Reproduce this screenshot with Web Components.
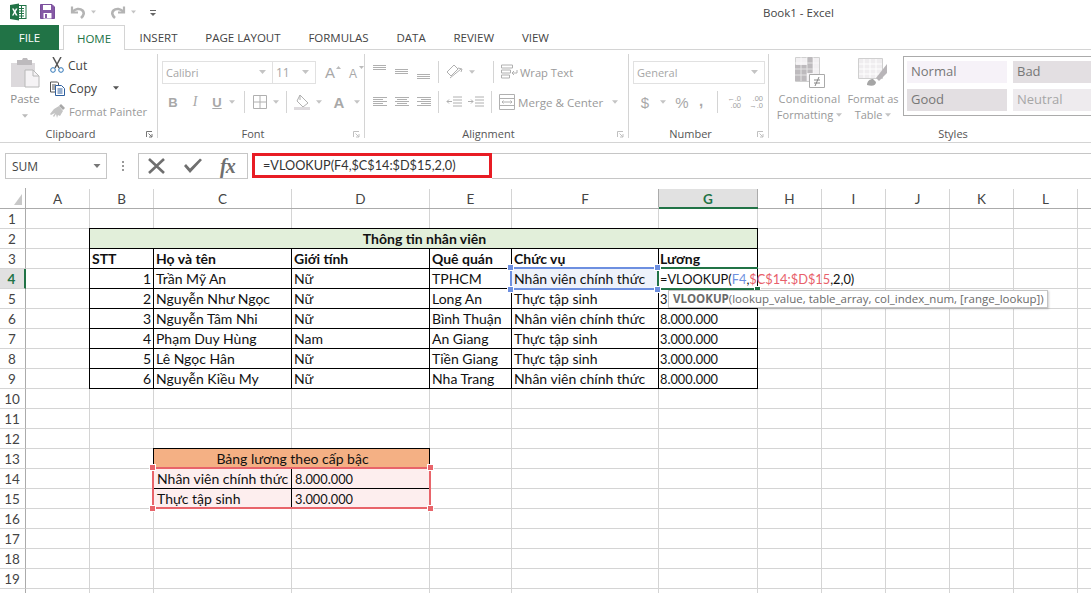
<!DOCTYPE html>
<html><head><meta charset="utf-8"><title>Book1 - Excel</title>
<style>
html,body{margin:0;padding:0;height:593px;overflow:hidden;background:#fff}
xl-app{display:flex;flex-direction:column;width:1091px;height:593px;overflow:hidden;font-family:"Open Sans","Noto Sans",sans-serif;color:#444}
</style></head><body>
<xl-app>
<xl-titlebar></xl-titlebar>
<xl-tabs></xl-tabs>
<xl-ribbon></xl-ribbon>
<xl-formula-bar></xl-formula-bar>
<xl-sheet></xl-sheet>
</xl-app>
<script>
const arrow=(c='#aaa',w=7)=>`<svg width="${w}" height="4" viewBox="0 0 7 4"><path d="M0 0h7L3.5 4z" fill="${c}"/></svg>`;
const lines=(rows,w=14,c='#b0b0b0')=>`<svg width="${w}" height="16" viewBox="0 0 ${w} 16"><g stroke="${c}" stroke-width="1">${rows.map(r=>`<path d="M${r[0]} ${r[2]+.5}H${r[1]}"/>`).join('')}</g></svg>`;
function def(name,css,html,after){
  customElements.define(name,class extends HTMLElement{
    connectedCallback(){
      if(this.shadowRoot)return;
      const s=this.attachShadow({mode:'open'});
      s.innerHTML=`<style>${css}</style>`+(typeof html==='function'?html(this):html);
      if(after)after(s,this);
    }
  });
}
const undo=`<path d="M3 1.500v6h6" fill="none" stroke="#b4b4b4" stroke-width="2.200"/><path d="M3.500 7C6 3.500 11 3 13.500 5.500c2 2 1.500 5-1.500 7.500" fill="none" stroke="#b4b4b4" stroke-width="2.600"/>`;
def('xl-titlebar',`
:host{display:flex;height:25px;flex:none;align-items:center;font:12px "Open Sans",sans-serif;color:#444;position:relative}
svg{display:block;flex:none}
.t{position:absolute;left:763px;top:5px;font-size:11.5px;line-height:16px;color:#444}
.q{display:flex;align-items:center;padding-left:9px}
`,`<div class="q">
<svg width="18" height="18" viewBox="0 0 18 18" style="margin-top:-2px"><rect x="8" y="2.500" width="9" height="13" fill="#fff" stroke="#217346"/><path d="M10 5.500h5M10 8h5M10 10.500h5M10 13h5M12.500 3v12" stroke="#217346"/><path d="M1 2l9-1.500v17L1 16z" fill="#217346"/><path d="M3 5.500h1.800l1 2 1-2h1.700L6.700 9l1.900 3.500H6.800L5.700 10.300 4.600 12.500H3L4.900 9z" fill="#fff"/></svg>
<svg width="15" height="15" viewBox="0 0 15 15" style="margin-left:13px;margin-top:-2px"><path d="M.5.500h11.500l2.500 2.500v11.500H.5z" fill="#8559a5" stroke="#7a4f9c"/><rect x="3" y="1" width="8" height="5" fill="#fff"/><rect x="3.500" y="9" width="8" height="5.500" fill="#fff"/><rect x="5" y="10" width="2" height="4" fill="#8559a5"/></svg>
<svg width="16" height="14" viewBox="0 0 16 14" style="margin-left:14px;margin-top:-2px">${undo}</svg>
<span style="margin-left:6px;margin-top:-2px;line-height:0">${arrow('#c4c4c4',5)}</span>
<svg width="16" height="14" viewBox="0 0 16 14" style="margin-left:15px;margin-top:-2px;transform:scaleX(-1)">${undo}</svg>
<span style="margin-left:4px;margin-top:-2px;line-height:0">${arrow('#c4c4c4',5)}</span>
<svg width="6" height="7" viewBox="0 0 6 7" style="margin-left:14px;margin-top:1px"><path d="M0 .500h6" stroke="#666"/><path d="M0 3h6L3 6z" fill="#666"/></svg>
</div><span class="t">Book1 - Excel</span>`);

def('xl-tabs',`
:host{display:flex;height:25px;flex:none;box-sizing:border-box;border-bottom:1px solid #d4d4d4;font:11.5px "Open Sans",sans-serif;color:#444}
.f{width:59px;height:25px;background:#217346;color:#fff;display:flex;align-items:center;justify-content:center;flex:none}
.h{margin-left:4px;width:62px;height:25px;box-sizing:border-box;border:1px solid #d4d4d4;border-bottom:0;background:#fff;color:#217346;display:flex;align-items:center;justify-content:center;flex:none}
.r{display:flex;align-items:center;gap:27.8px;padding-left:14.5px;height:24px}
`,`<div class="f">FILE</div><div class="h">HOME</div><div class="r"><span>INSERT</span><span>PAGE LAYOUT</span><span>FORMULAS</span><span>DATA</span><span>REVIEW</span><span>VIEW</span></div>`);

def('xl-group',`
:host{display:flex;flex-direction:column;flex:none;height:84px;box-sizing:border-box;border-right:1px solid #d4d4d4}
.b{flex:1;min-height:0;display:block}
.l{display:flex;align-items:center;height:13px;flex:none;margin-bottom:-2px}
.l span{flex:1;text-align:center;font-size:11px;color:#555;line-height:13px}
.l span.p{padding-right:5px}
.l svg{flex:none;margin:1px 4px 0 0}
`,h=>`<div class="b"><slot></slot></div><div class="l"><span class="${h.hasAttribute('nolaunch')?'':'p'}">${h.getAttribute('label')}</span>${h.hasAttribute('nolaunch')?'':`<svg width="7" height="7" viewBox="0 0 7 7"><path d="M.5 6V.5H6" fill="none" stroke="${h.getAttribute('lc')||'#c0c0c0'}"/><path d="M2.500 2.500L6 6M6 3v3H3" fill="none" stroke="${h.getAttribute('lc')||'#c0c0c0'}"/></svg>`}</div>`);

const alignTop=lines([[1,14,1],[1,14,3],[1,14,5]],15);
const alignMid=lines([[1,14,5],[1,14,7],[1,14,9]],15);
const alignBot=lines([[1,14,10],[1,14,12],[1,14,14]],15);
const aL=lines([[1,15,3],[1,11,5],[1,15,7],[1,11,9],[1,15,11]],15);
const aC=lines([[1,15,3],[3,13,5],[1,15,7],[3,13,9],[1,15,11]],15);
const aR=lines([[1,15,3],[5,15,5],[1,15,7],[5,15,9],[1,15,11]],15);
def('xl-ribbon',`
:host{display:flex;height:93px;flex:none;box-sizing:border-box;border-bottom:1px solid #d4d4d4;padding-top:4px;font:11.5px "Open Sans",sans-serif;color:#999}
svg{display:block;flex:none}
.rows{display:flex;flex-direction:column;gap:8px;padding-top:7px}
.row{display:flex;align-items:center;height:22px}
.sep{width:1px;height:22px;background:#d4d4d4;flex:none}
.combo{box-sizing:border-box;height:23px;border:1px solid #e1e1e1;display:flex;align-items:center;justify-content:space-between;padding:0 6px 0 3px;color:#a6a6a6;font-size:11px;flex:none;background:#fff}
.gl{display:flex;justify-content:center;flex:none;color:#a8a8a8;font-weight:700;font-family:"Liberation Sans",sans-serif}
.sm{flex:none;width:16px;font:7.5px/7px "Liberation Sans",sans-serif;color:#a0a0a0;text-align:right;white-space:nowrap}
.clip{display:flex;height:100%}
.paste{width:50px;flex:none;display:flex;flex-direction:column;align-items:center;padding-top:4px;box-sizing:border-box;color:#8e8e8e}
.paste span{margin-top:3px;line-height:16px}
.paste svg:last-child{margin-top:7px}
.cc{display:flex;flex-direction:column;padding-top:3px;gap:7px}
.cc div{display:flex;align-items:center;height:16px;gap:4px;color:#444;font-size:12px}
.cc .off{color:#999;font-size:11.2px}
.big{display:flex;flex-direction:column;align-items:center;flex:none;text-align:center;line-height:16px;font-size:11px;color:#999;padding-top:3px}
.big svg{margin-bottom:3px}
.styles{display:flex;height:100%;padding-left:6px}
.gal{margin-left:1px;margin-top:2px;width:370px;height:60px;box-sizing:border-box;border:1px solid #ababab;padding:4px 3px;display:grid;grid-template-columns:100px 100px;grid-template-rows:22px 22px;gap:6px;flex:none}
.gal div{font-size:13px;line-height:20px;padding-left:4px;color:#777}
`,`
<xl-group label="Clipboard" lc="#777" style="width:158px"><div class="clip">
 <div class="paste"><svg width="30" height="30" viewBox="0 0 30 30"><path d="M1 5h24v24H1z" fill="#dcd9dc"/><path d="M7 2h5l1-2h4l1 2h4v5H7z" fill="#bdbabd"/><path d="M15 12h8l6 6v11H15z" fill="#f5f3f5" stroke="#b8b8b8"/><path d="M23 12v6h6" fill="none" stroke="#b8b8b8"/></svg><span>Paste</span>${arrow('#bbb',6)}</div>
 <div class="cc">
  <div><svg width="14" height="16" viewBox="0 0 14 16"><path d="M3 0l6 11M11 0L5 11" stroke="#555" stroke-width="1.500"/><circle cx="3" cy="13" r="2.300" fill="none" stroke="#2e75b6"/><circle cx="11" cy="13" r="2.300" fill="none" stroke="#2e75b6"/></svg><span>Cut</span></div>
  <div><svg width="15" height="15" viewBox="0 0 15 15"><path d="M.5 1h7l1 1v9H.5z" fill="#fff" stroke="#555"/><path d="M2 4h4M2 6h4M2 8h3" stroke="#555"/><path d="M5.500 4.500h6l3 3v7h-9z" fill="#fff" stroke="#2e5f9e"/><path d="M7.500 8h5M7.500 10h5M7.500 12h5" stroke="#2e5f9e"/></svg><span>Copy</span><span style="margin-left:12px">${arrow('#555',6)}</span></div>
  <div class="off"><svg width="15" height="15" viewBox="0 0 15 15"><path d="M9 2l2-2 4 4-2 2z" fill="#a8a8a8"/><path d="M4 5l5-3 4 5-3 5-2-1-1 3-1-4-2 3-1-1 2-3-4 2-1-1z" fill="#c4c4c4"/></svg><span>Format Painter</span></div>
 </div></div></xl-group>

<xl-group label="Font" style="width:207px"><div class="rows" style="padding-left:4px">
 <div class="row"><div class="combo" style="width:111px"><span>Calibri</span>${arrow('#c4c4c4')}</div><div class="combo" style="width:43px;border-left:0"><span style="font-size:12px">11</span>${arrow('#c4c4c4')}</div>
  <span class="gl" style="width:14px;margin-left:7px;font-size:15px;font-weight:400">A</span><svg width="5" height="3" viewBox="0 0 5 3" style="margin:-9px 0 0 -1px"><path d="M0 3h5L2.500 0z" fill="#bbb"/></svg>
  <span class="gl" style="width:14px;margin-left:5px;font-size:12px;font-weight:400;margin-top:3px">A</span><svg width="5" height="3" viewBox="0 0 5 3" style="margin:-9px 0 0 -1px"><path d="M0 0h5L2.500 3z" fill="#bbb"/></svg></div>
 <div class="row"><span class="gl" style="width:22px;font-size:13px">B</span><span class="gl" style="width:22px;font:italic 14px 'Liberation Serif',serif;color:#a8a8a8">I</span><span class="gl" style="width:22px;font-size:13px;text-decoration:underline">U</span><span style="width:11px;margin-left:1px">${arrow('#c4c4c4',6)}</span><div class="sep" style="margin-left:4px"></div>
 <svg width="14" height="14" viewBox="0 0 14 14" style="margin-left:8px"><path d="M.5.500h13v13H.500zM7 .5v13M.5 7h13" fill="none" stroke="#b0b0b0"/></svg><span style="margin-left:6px">${arrow('#c4c4c4',6)}</span><div class="sep" style="margin-left:7px"></div>
 <svg width="17" height="16" viewBox="0 0 17 16" style="margin-left:7px"><path d="M6 1L14 9l-5 4-6-6z" fill="none" stroke="#b0b0b0"/><path d="M6 1v5" stroke="#b0b0b0"/><path d="M0 13h16v3H0z" fill="#dedbde"/></svg><span style="margin-left:5px">${arrow('#c4c4c4',6)}</span>
 <span class="gl" style="width:18px;margin-left:8px;font-size:15px">A</span><span style="margin-left:6px">${arrow('#c4c4c4',6)}</span></div>
</div></xl-group>

<xl-group label="Alignment" style="width:264px"><div class="rows" style="padding-left:7px">
 <div class="row">${alignTop}<span style="width:7px"></span>${alignMid}<span style="width:7px"></span>${alignBot}<div class="sep" style="margin:0 7px"></div>
  <svg width="17" height="16" viewBox="0 0 17 16"><g fill="none" stroke="#b0b0b0"><path d="M1 8L8 1l4 4-7 7z"/><path d="M4 14L15 5M12 4l4 1-1 3"/></g></svg><span style="margin-left:6px">${arrow('#c4c4c4',6)}</span><div class="sep" style="margin-left:18px"></div>
  <svg width="17" height="16" viewBox="0 0 17 16" style="margin-left:7px"><g fill="none" stroke="#b0b0b0"><path d="M.5 1h11v3H.5zM.5 6h9v3H.5zM.5 11h8v3H.5z"/><path d="M16 6v3h-5M13 7l-2 2 2 2"/></g></svg><span style="margin-left:2px;color:#9a9a9a;font-size:11.200px">Wrap Text</span></div>
 <div class="row">${aL}<span style="width:7px"></span>${aC}<span style="width:7px"></span>${aR}<div class="sep" style="margin:0 7px"></div>
  <svg width="16" height="16" viewBox="0 0 16 16"><g fill="none" stroke="#b0b0b0"><path d="M7 3h9M7 6h9M7 9h9M7 12h9M1 7.500h5M3 5.500l-2 2 2 2"/></g></svg><span style="width:6px"></span><svg width="16" height="16" viewBox="0 0 16 16"><g fill="none" stroke="#b0b0b0"><path d="M7 3h9M7 6h9M7 9h9M7 12h9M0 7.500h5M3 5.500l2 2-2 2"/></g></svg><div class="sep" style="margin-left:7px"></div>
  <svg width="16" height="16" viewBox="0 0 16 16" style="margin-left:7px"><g fill="none" stroke="#b0b0b0"><path d="M.5.500h15v15H.500zM.5 4.500h15M.5 11.500h15"/><path d="M3 8h10M4.500 6.500L3 8l1.500 1.500M11.500 6.500L13 8l-1.500 1.500"/></g></svg><span style="margin-left:3px;color:#9a9a9a;font-size:11.600px">Merge &amp; Center</span><span style="margin-left:9px">${arrow('#c4c4c4',6)}</span></div>
</div></xl-group>

<xl-group label="Number" style="width:140px"><div class="rows" style="padding-left:4px">
 <div class="row"><div class="combo" style="width:132px"><span>General</span>${arrow('#c4c4c4')}</div></div>
 <div class="row"><span class="gl" style="width:14px;margin-left:5px;font-size:15px;font-weight:400">$</span><span style="margin-left:8px">${arrow('#c4c4c4',6)}</span><span class="gl" style="width:16px;margin-left:8px;font-size:15px;font-weight:400">%</span><span class="gl" style="width:8px;margin-left:7px;font-size:15px;margin-top:-3px">,</span><div class="sep" style="margin-left:12px"></div>
 <span class="sm" style="margin-left:7px">←.0<br>.00</span><span class="sm" style="margin-left:6px">.00<br>→.0</span></div>
</div></xl-group>

<xl-group label="Styles" nolaunch style="width:368px;border-right:0"><div class="styles">
 <div class="big" style="width:69px"><svg width="30" height="31" viewBox="0 0 30 31"><path d="M.5.500h24v24H.500z" fill="#f2f0f2" stroke="#d0d0d0"/><path d="M12 0h6v8h-6zM0 8h18v8H0zM0 16h12v8H0z" fill="#bdbabd"/><path d="M6 0v24M12 0v24M18 0v24M0 6h24M0 12h24M0 18h24" stroke="#fff" opacity=".6"/><path d="M14.500 17.500h15v13h-15z" fill="#fff" stroke="#aaa"/><path d="M19 23h6M19 26h6M24 20l-4 9" stroke="#888" fill="none"/></svg><span style="color:#999;letter-spacing:.3px">Conditional</span><span style="color:#999">Formatting <span style="display:inline-block;vertical-align:middle">${arrow('#c4c4c4',6)}</span></span></div>
 <div class="big" style="width:58px"><svg width="30" height="31" viewBox="0 0 30 31"><path d="M.5 1.500h24v20H.500z" fill="#efedef" stroke="#cfcfcf"/><path d="M6 2v19M12 2v19M18 2v19M1 7h23M1 12h23M1 17h23" stroke="#fff"/><path d="M29 7L18 21l3 3 8-8z" fill="#b8b5b8"/><path d="M9 28c0-4 3-6 6-6l3 3c0 3-3 5-9 3z" fill="#a5a5a5"/></svg><span>Format as</span><span>Table <span style="display:inline-block;vertical-align:middle">${arrow('#c4c4c4',6)}</span></span></div>
 <div class="gal"><div style="background:#f6f2f8">Normal</div><div style="background:#e3dfe2">Bad</div><div style="background:#e3dfe2">Good</div><div style="background:#eeebee;color:#a6a6a6">Neutral</div></div>
</div></xl-group>
`);

def('xl-formula-bar',`
:host{display:flex;height:45px;flex:none;box-sizing:border-box;padding:10px 0 0 5px;font:12.500px "Open Sans",sans-serif;color:#444}
.nb{box-sizing:border-box;width:102px;height:26px;border:1px solid #c6c6c6;display:flex;align-items:center;justify-content:space-between;padding:0 5px 0 6px;font-size:12px}
.dots{width:31px;display:flex;flex-direction:column;gap:2px;align-items:center;justify-content:center;height:26px}
.dots i{width:2px;height:2px;background:#999}
.btns{box-sizing:border-box;width:110px;height:26px;border:1px solid #c6c6c6;display:flex;align-items:center;padding-left:8px}
.fx{font:italic 700 20px "Liberation Serif",serif;color:#6f6f6f;margin-left:17px;line-height:24px;letter-spacing:-1px}
.in{margin-left:4px;box-sizing:border-box;width:240px;height:25px;border:3px solid #e81c24;font:12.700px Lato,sans-serif;line-height:19px;padding:0 0 0 8px;color:#333;white-space:nowrap;overflow:hidden;flex:none}
.rest{flex:1;height:26px;box-sizing:border-box;border-top:1px solid #c6c6c6;border-bottom:1px solid #c6c6c6}
svg{display:block;flex:none}
`,`<div class="nb"><span>SUM</span>${arrow('#777',8)}</div><div class="dots"><i></i><i></i><i></i></div>
<div class="btns"><svg width="19" height="18" viewBox="0 0 19 18"><path d="M2 2l15 14M17 2L2 16" stroke="#6f6f6f" stroke-width="2.600"/></svg><svg width="20" height="18" viewBox="0 0 20 18" style="margin-left:17px"><path d="M1 9l6 7L19 3l-2-1.500L7 11.500 3 7z" fill="#6f6f6f"/></svg><span class="fx">fx</span></div>
<div class="in">=VLOOKUP(F4,$C$14:$D$15,2,0)</div><div class="rest"></div>`);

const COLS=['A','B','C','D','E','F','G','H','I','J','K','L'];
const W=[64,64,138,138,82,147,99,64,64,64,64,64];
const data={
 3:['STT','Họ và tên','Giới tính','Quê quán','Chức vụ','Lương'],
 4:[1,'Trần Mỹ An','Nữ','TPHCM','Nhân viên chính thức',''],
 5:[2,'Nguyễn Như Ngọc','Nữ','Long An','Thực tập sinh','3'],
 6:[3,'Nguyễn Tâm Nhi','Nữ','Bình Thuận','Nhân viên chính thức','8.000.000'],
 7:[4,'Phạm Duy Hùng','Nam','An Giang','Thực tập sinh','3.000.000'],
 8:[5,'Lê Ngọc Hân','Nữ','Tiền Giang','Thực tập sinh','3.000.000'],
 9:[6,'Nguyễn Kiều My','Nữ','Nha Trang','Nhân viên chính thức','8.000.000']};
function sheet(){
 let h='';
 const pos=(r,c,cs=1)=>`grid-row:${r+1};grid-column:${c+1}${cs>1?' / span '+cs:''}`;
 h+=`<div class="ch corner" style="${pos(0,0)}"><svg width="8" height="11" viewBox="0 0 8 11"><path d="M8 0v11H0z" fill="#c8c8c8"/></svg></div>`;
 COLS.forEach((n,i)=>h+=`<div class="ch${n==='G'?' sel':''}" style="${pos(0,i+1)}"><span>${n}</span></div>`);
 h+=`<div class="ch" style="${pos(0,13)}"></div>`;
 for(let r=1;r<=20;r++){
  h+=`<div class="rh${r===4?' sel':''}" style="${pos(r,0)}">${r<20?r:''}</div>`;
  for(let c=1;c<=13;c++){
   if(r===2&&c>=2&&c<=7){ if(c===2)h+=`<div class="c b mg" style="${pos(r,2,6)}">Thông tin nhân viên</div>`; continue;}
   if(r===13&&(c===3||c===4)){ if(c===3)h+=`<div class="c b org" style="${pos(r,3,2)}">Bảng lương theo cấp bậc</div>`; continue;}
   if(data[r]&&c>=2&&c<=7){
     const v=data[r][c-2]; let cl='c b';
     if(r===3)cl+=' hd'; if(r>3&&c===2)cl+=' num';
     if(c===7)cl+=' gc';
     if(r>4&&c===7)cl+=' dg';
     if(r===4&&c===6)cl+=' ftint';
     if(r===4&&c===7){h+=`<div class="c b edit" style="${pos(r,c)}"></div>`;continue;}
     h+=`<div class="${cl}" style="${pos(r,c)}">${v}</div>`; continue;
   }
   if(r===14||r===15){
     if(c===3||c===4){const t={14:['Nhân viên chính thức','8.000.000'],15:['Thực tập sinh','3.000.000']}[r][c-3];
       h+=`<div class="c b rtint${c===4?' dg':''}" style="${pos(r,c)}">${t}</div>`;continue;}
   }
   h+=`<div class="c" style="${pos(r,c)}"></div>`;
  }
 }
 h+=`<div class="ov blue" style="${pos(4,6)}"><i class="hd1" style="left:-4px;top:-4px"></i><i class="hd1" style="right:-1px;top:-4px"></i><i class="hd1" style="left:-4px;bottom:-4px"></i><i class="hd1" style="right:-1px;bottom:-4px"></i></div>`;
 h+=`<div class="ov red" style="grid-row:15 / span 2;grid-column:4 / span 2"><i class="hd2" style="left:-4px;top:-4px"></i><i class="hd2" style="right:-4px;top:-4px"></i><i class="hd2" style="left:-4px;bottom:-4px"></i><i class="hd2" style="right:-4px;bottom:-4px"></i></div>`;
 h+=`<div class="ov green" style="${pos(4,7)}"><i class="hd3"></i></div>`;
 h+=`<div class="fm" style="${pos(4,7,2)}">=VLOOKUP(<span style="color:#6d8fe0">F4</span>,<span style="color:#e8606a">$C$14:$D$15</span>,2,0)</div>`;
 h+=`<div class="tip"><b>VLOOKUP</b>(lookup_value, table_array, col_index_num, [range_lookup])</div>`;
 return `<div class="g">${h}</div>`;
}
def('xl-sheet',`
:host{display:block;flex:1;min-height:0;overflow:hidden;position:relative;font:14px Lato,"Noto Sans",sans-serif;color:#111}
.g{display:grid;position:relative;grid-template-columns:26px ${W.join('px ')}px 14px;grid-template-rows:21px repeat(20,20px);width:1091px}
.ch{box-sizing:border-box;border-bottom:1px solid #ababab;display:flex;align-items:stretch;color:#444;background:#fff;font-size:13.500px;padding-top:1px}
.ch span{flex:1;display:flex;align-items:center;justify-content:center;box-sizing:border-box;border-right:1px solid #d4d4d4;padding-top:1px}
.ch.corner{border-right:1px solid #ababab;justify-content:flex-end;align-items:flex-end;padding:0 3px 3px 0}
.ch.sel{color:#217346;font-weight:700;border-bottom:2px solid #217346}
.ch.sel span{background:#e1e1e1;border-left:1px solid #ababab;margin-left:-1px;border-right:1px solid #ababab}
.rh{box-sizing:border-box;border-right:1px solid #ababab;border-bottom:1px solid #d4d4d4;display:flex;align-items:center;justify-content:center;color:#444;font-size:13.500px;background:#fff;padding:1px 1px 0 0}
.rh.sel{background:#e1e1e1;color:#217346;font-weight:700;border-right:2px solid #217346}
.c{box-sizing:border-box;border-right:1px solid #d4d4d4;border-bottom:1px solid #d4d4d4;line-height:20px;padding-left:2px;white-space:nowrap;overflow:hidden}
.c.b{border-right:1px solid #000;border-bottom:1px solid #000;box-shadow:-1px 0 #000,0 -1px #000,-1px -1px #000;z-index:1;overflow:visible}
.mg{background:#e2efda;text-align:center;font-weight:700}
.hd{font-weight:700}
.num{text-align:right;padding-right:2px}
.gc{padding-left:1px}
.dg{font-size:12.800px;line-height:21px}
.org{background:#f4b084;text-align:center}
.ftint{background:#eef2fb}
.rtint{background:#fdeeee;padding-left:3px}
.edit{background:#fff}
.ov{z-index:3;position:relative;box-sizing:border-box;pointer-events:none}
.blue{margin:-2px 0 -1px -2px;border:2px solid #6d8fe0;border-right:0;z-index:5}
.red{margin:-2px -1px 0 -2px;border:2px solid #e8646a}
.green{margin:-2px 0 -1px -2px;border-top:2px solid #217346;border-bottom:2px solid #217346;border-left:2px solid #217346;z-index:4}
.ov i{position:absolute;width:5px;height:5px}
.hd1{background:#6d8fe0;outline:1px solid #fff}
.hd2{background:#e8646a;outline:1px solid #fff}
.hd3{background:#217346;right:-2px;bottom:-4px;outline:1px solid #fff}
.fm{z-index:6;line-height:21px;padding-left:1px;white-space:nowrap;color:#111;font-size:12.800px}
.tip{position:absolute;left:668px;top:102px;z-index:7;box-sizing:border-box;width:380px;height:18px;background:#fff;border:1px solid #c4c4c4;box-shadow:1px 1px 2px rgba(0,0,0,.2);font:11.500px "Open Sans",sans-serif;line-height:16px;padding-left:4px;color:#6a6a6a;white-space:nowrap}
.tip b{font-weight:700;color:#6a6a6a}
`,sheet);
customElements.define('xl-app',class extends HTMLElement{connectedCallback(){if(!this.shadowRoot){this.attachShadow({mode:'open'}).innerHTML='<slot></slot>'}}});
</script>
</body></html>
